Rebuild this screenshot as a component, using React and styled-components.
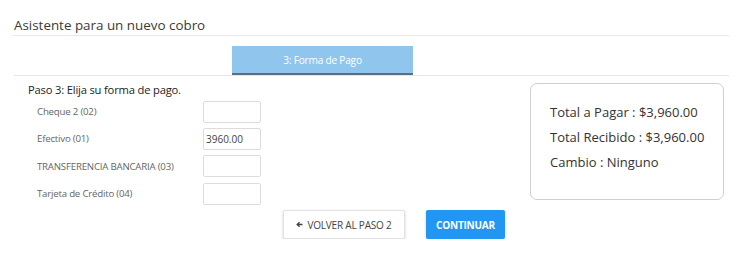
import React from "react";
import styled, { createGlobalStyle } from "styled-components";

const Global = createGlobalStyle`
  html, body { margin: 0; padding: 0; background: #fff; }
  body { font-family: "Open Sans", "Noto Sans", Arial, sans-serif; color: #333; }
  * { box-sizing: border-box; }
`;

const Page = styled.div`
  width: 749px;
  padding: 0 20px 0 12px;
`;

const Title = styled.h1`
  margin: 0;
  padding: 16px 0 0 2px;
  height: 36px;
  font-size: 13.4px;
  font-weight: 400;
  color: #3a3a3a;
  border-bottom: 1px solid #eaeaea;
  line-height: 18px;
`;

const TabBar = styled.div`
  margin-top: 10px;
  margin-left: 2px;
  display: flex;
  padding-left: 218px;
  border-bottom: 1px solid #e6e6e6;
`;

const Tab = styled.div`
  width: 181px;
  height: 29px;
  background: #90c6ee;
  border-bottom: 2px solid #5d6d7c;
  color: #fff;
  font-size: 10.1px;
  letter-spacing: -0.2px;
  display: flex;
  align-items: center;
  justify-content: center;
`;

const Body = styled.div`
  display: flex;
  margin-left: 2px;
`;

const FormCol = styled.div`
  width: 516px;
  padding: 6px 0 0 14px;
`;

const StepTitle = styled.div`
  font-size: 11.2px;
  letter-spacing: -0.18px;
  color: #222;
  line-height: 16px;
`;

const Row = styled.div`
  display: flex;
  align-items: center;
  height: 27.3px;
  padding-left: 9px;
`;

const Label = styled.label`
  width: 166px;
  font-size: 9.7px;
  letter-spacing: -0.22px;
  color: #666;
`;

const Input = styled.input`
  width: 58px;
  height: 22px;
  border: 1px solid #dcdcdc;
  border-radius: 2px;
  font-family: inherit;
  font-size: 10px;
  color: #444;
  padding: 0 2px;
  outline: none;
`;

const SummaryBox = styled.div`
  margin-top: 7px;
  width: 194px;
  height: 117px;
  border: 1px solid #cfcfcf;
  border-radius: 7px;
  padding: 16px 0 0 19px;
`;

const SummaryLine = styled.div`
  font-size: 13px;
  line-height: 25px;
  color: #333;
`;

const Actions = styled.div`
  display: flex;
  gap: 21px;
  padding: 3px 0 0 269px;
  margin-left: 2px;
`;

const Button = styled.button`
  height: 29px;
  padding: 0;
  display: flex;
  align-items: center;
  justify-content: center;
  gap: 4px;
  font-family: inherit;
  font-size: 10px;
  letter-spacing: -0.2px;
  white-space: nowrap;
  text-transform: uppercase;
  border-radius: 2px;
  cursor: pointer;
  border: ${p => (p.$primary ? "none" : "1px solid #e2e2e2")};
  background: ${p => (p.$primary ? "#2196f3" : "#fff")};
  color: ${p => (p.$primary ? "#fff" : "#444")};
  font-weight: ${p => (p.$primary ? 700 : 400)};
  box-shadow: 0 1px 3px rgba(0, 0, 0, 0.18);
  width: ${p => p.$w}px;
`;

const ArrowLeft = () => (
  <svg width="7" height="7" viewBox="0 0 7 7" aria-hidden="true">
    <path d="M6.5 3.5H1.5M3.6 1.2L1.2 3.5L3.6 5.8" stroke="#444" strokeWidth="1.4" fill="none" />
  </svg>
);

const methods = [
  { label: "Cheque 2 (02)", value: "" },
  { label: "Efectivo (01)", value: "3960.00" },
  { label: "TRANSFERENCIA BANCARIA (03)", value: "" },
  { label: "Tarjeta de Crédito (04)", value: "" },
];

export default function App() {
  return (
    <Page>
      <Global />
      <Title>Asistente para un nuevo cobro</Title>
      <TabBar>
        <Tab>3: Forma de Pago</Tab>
      </TabBar>
      <Body>
        <FormCol>
          <StepTitle>Paso 3: Elija su forma de pago.</StepTitle>
          {methods.map(m => (
            <Row key={m.label}>
              <Label>{m.label}</Label>
              <Input defaultValue={m.value} />
            </Row>
          ))}
        </FormCol>
        <SummaryBox>
          <SummaryLine>Total a Pagar : $3,960.00</SummaryLine>
          <SummaryLine>Total Recibido : $3,960.00</SummaryLine>
          <SummaryLine>Cambio : Ninguno</SummaryLine>
        </SummaryBox>
      </Body>
      <Actions>
        <Button $w={122}>
          <ArrowLeft />
          Volver al paso 2
        </Button>
        <Button $primary $w={79}>Continuar</Button>
      </Actions>
    </Page>
  );
}
